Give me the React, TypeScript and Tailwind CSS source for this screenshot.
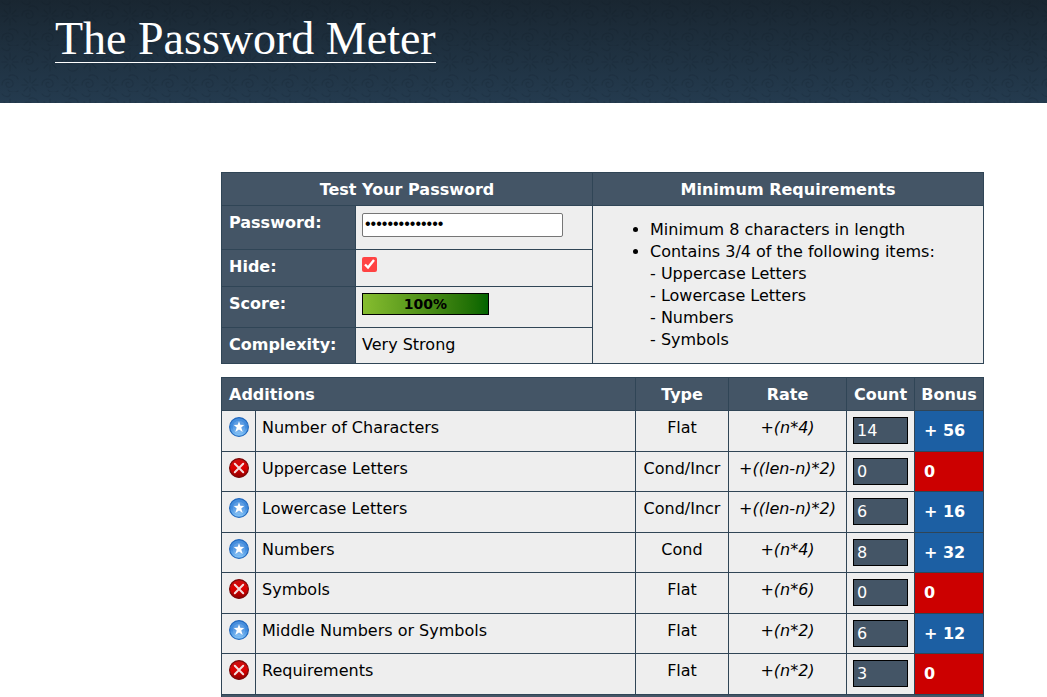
import { useState } from 'react';

type Row = { name: string; type: string; rate: string; count: number; bonus: string; good: boolean };

const rows: Row[] = [
  { name: 'Number of Characters', type: 'Flat', rate: '+(n*4)', count: 14, bonus: '+ 56', good: true },
  { name: 'Uppercase Letters', type: 'Cond/Incr', rate: '+((len-n)*2)', count: 0, bonus: '0', good: false },
  { name: 'Lowercase Letters', type: 'Cond/Incr', rate: '+((len-n)*2)', count: 6, bonus: '+ 16', good: true },
  { name: 'Numbers', type: 'Cond', rate: '+(n*4)', count: 8, bonus: '+ 32', good: true },
  { name: 'Symbols', type: 'Flat', rate: '+(n*6)', count: 0, bonus: '0', good: false },
  { name: 'Middle Numbers or Symbols', type: 'Flat', rate: '+(n*2)', count: 6, bonus: '+ 12', good: true },
  { name: 'Requirements', type: 'Flat', rate: '+(n*2)', count: 3, bonus: '0', good: false },
];

function Gradients() {
  return (
    <svg className="absolute h-0 w-0" aria-hidden="true">
      <defs>
        <linearGradient id="blue" x1="0" y1="0" x2="0" y2="1">
          <stop offset="0" stopColor="#4a90dd" />
          <stop offset="0.5" stopColor="#3d8ade" />
          <stop offset="1" stopColor="#8ecbfa" />
        </linearGradient>
        <linearGradient id="red" x1="0" y1="0" x2="0" y2="1">
          <stop offset="0" stopColor="#c81010" />
          <stop offset="0.5" stopColor="#dc0000" />
          <stop offset="1" stopColor="#8e0000" />
        </linearGradient>
        <pattern id="swirl" width="40" height="46" patternUnits="userSpaceOnUse">
          <g fill="none" stroke="#0c1620" strokeWidth="1.2" strokeLinecap="round">
            <path d="M10 7v6M10 19v6M2 16h5M13 16h5M4 10l4 4M16 10l-4 4M4 22l4-4M16 22l-4-4" />
            <path d="M22 16c0-7 10-8 11-2 1 5-7 6-7 1 0-2 3-2 3-1M38 10c-1-4-6-5-9-3M38 22c-2 4-8 4-10 1" />
            <path d="M30 30v6M30 42v4M22 39h5M33 39h5M24 33l4 4M36 33l-4 4M24 45l4-4M36 45l-4-4" />
            <path d="M2 39c0-7 10-8 11-2 1 5-7 6-7 1 0-2 3-2 3-1M18 33c-1-4-6-5-9-3M18 45c-2 2-8 2-10-1" />
            <path d="M2 2c3 4 8 3 8 0M22 2c3 4 8 3 8 0" />
          </g>
        </pattern>
      </defs>
    </svg>
  );
}

function ExceptionalIcon() {
  return (
    <svg viewBox="0 0 20 20" className="block h-5 w-5" role="img" aria-label="Exceptional">
      <circle cx="10" cy="10" r="9.4" fill="url(#blue)" stroke="#2168bd" strokeWidth="1.1" />
      <circle cx="10" cy="10" r="6.3" fill="#fff" opacity="0.15" />
      <path
        d="M10 4.2l1.3 3.6 3.9.3-2.9 2.3 1.4 4.5L10 12.4l-3.7 2.5 1.4-4.5-2.9-2.3 3.9-.3z"
        fill="#fff"
      />
    </svg>
  );
}

function FailureIcon() {
  return (
    <svg viewBox="0 0 20 20" className="block h-5 w-5" role="img" aria-label="Failure">
      <circle cx="10" cy="10" r="9.4" fill="url(#red)" stroke="#780808" strokeWidth="1.2" />
      <path d="M5.8 5.8l8.4 8.4M14.2 5.8l-8.4 8.4" stroke="#f3dede" strokeWidth="2" strokeLinecap="round" />
    </svg>
  );
}

const cell = 'border border-[#304556] px-[6px] align-top';
const head = 'border border-[#304556] bg-[#445566] font-bold text-white';
const label = 'border border-[#304556] bg-[#445566] pt-[6px] pl-[7px] text-left align-top font-bold text-white';

export default function App() {
  const [password, setPassword] = useState('abcdef12345678');
  const [hide, setHide] = useState(true);

  return (
    <div className="min-h-screen bg-white font-['DejaVu_Sans',sans-serif] text-[16px] leading-[22px] text-black">
      <Gradients />
      <header className="relative h-[103px] bg-linear-to-b from-[#192631] to-[#243b4f] px-[55px] pt-[15px]">
        <svg className="absolute inset-0 h-full w-full opacity-15" aria-hidden="true">
          <rect width="100%" height="100%" fill="url(#swirl)" />
        </svg>
        <h1 className="relative inline-block border-b border-white font-['Liberation_Serif',serif] text-[46px] leading-[47px] text-white">
          The Password Meter
        </h1>
      </header>

      <main className="flex flex-col gap-[13px] pt-[69px] pr-[63px] pl-[221px]">
        <table className="w-full table-fixed border-collapse bg-[#eeeeee]">
          <colgroup>
            <col className="w-[134px]" />
            <col className="w-[237px]" />
            <col />
          </colgroup>
          <thead>
            <tr className="h-[33px]">
              <th colSpan={2} className={`${head} pt-[2px]`}>Test Your Password</th>
              <th className={`${head} pt-[2px]`}>Minimum Requirements</th>
            </tr>
          </thead>
          <tbody>
            <tr className="h-[44px]">
              <th className={label}><label htmlFor="password">Password:</label></th>
              <td className={`${cell} pt-[7px]`}>
                <input
                  id="password"
                  type={hide ? 'password' : 'text'}
                  value={password}
                  onChange={(e) => setPassword(e.target.value)}
                  className="block h-[24px] w-[201px] rounded-[2px] border border-[#767676] bg-white px-[2px] pb-[2px] font-['Liberation_Sans',sans-serif] text-[16px]"
                />
              </td>
              <td rowSpan={4} className="border border-[#304556] pt-[13px] pl-[57px] align-top">
                <ul className="list-disc">
                  <li>Minimum 8 characters in length</li>
                  <li>
                    Contains 3/4 of the following items:
                    <br />- Uppercase Letters
                    <br />- Lowercase Letters
                    <br />- Numbers
                    <br />- Symbols
                  </li>
                </ul>
              </td>
            </tr>
            <tr className="h-[37px]">
              <th className={label}><label htmlFor="hide">Hide:</label></th>
              <td className={`${cell} pt-[7px]`}>
                <input
                  id="hide"
                  type="checkbox"
                  checked={hide}
                  onChange={(e) => setHide(e.target.checked)}
                  className="block h-[15px] w-[15px] accent-[#ff4343]"
                />
              </td>
            </tr>
            <tr className="h-[41px]">
              <th className={label}>Score:</th>
              <td className={`${cell} pt-[6px]`}>
                <div className="h-[22px] w-[127px] border border-black bg-linear-to-r from-[#86bd2f] to-[#006400] text-center text-[14px] leading-[20px] font-bold">
                  100%
                </div>
              </td>
            </tr>
            <tr className="h-[36px]">
              <th className={label}>Complexity:</th>
              <td className={`${cell} pt-[6px]`}>Very Strong</td>
            </tr>
          </tbody>
        </table>

        <table className="w-full table-fixed border-collapse bg-[#eeeeee]">
          <colgroup>
            <col className="w-[34px]" />
            <col />
            <col className="w-[93px]" />
            <col className="w-[118px]" />
            <col className="w-[68px]" />
            <col className="w-[69px]" />
          </colgroup>
          <thead>
            <tr className="h-[33px]">
              <th colSpan={2} className={`${head} pt-[2px] pl-[7px] text-left`}>Additions</th>
              <th className={`${head} pt-[2px]`}>Type</th>
              <th className={`${head} pt-[2px]`}>Rate</th>
              <th className={`${head} pt-[2px]`}>Count</th>
              <th className={`${head} pt-[2px]`}>Bonus</th>
            </tr>
          </thead>
          <tbody>
            {rows.map((r) => (
              <tr key={r.name} className="odd:h-[41px] even:h-[40px]">
                <td className="border border-[#304556] pt-[6px] pl-[7px] align-top">
                  {r.good ? <ExceptionalIcon /> : <FailureIcon />}
                </td>
                <td className={`${cell} pt-[6px]`}>{r.name}</td>
                <td className={`${cell} pt-[6px] text-center whitespace-nowrap`}>{r.type}</td>
                <td className={`${cell} pt-[6px] text-center whitespace-nowrap italic`}>{r.rate}</td>
                <td className={`${cell} pt-[6px]`}>
                  <input
                    type="text"
                    readOnly
                    aria-label={`${r.name} count`}
                    value={r.count}
                    className="block h-[27px] w-[55px] border border-black bg-[#445566] px-[3px] text-white"
                  />
                </td>
                <td className={`border border-[#304556] pl-[9px] font-bold text-white ${r.good ? 'bg-[#1c5fa3]' : 'bg-[#cc0000]'}`}>
                  {r.bonus}
                </td>
              </tr>
            ))}
          </tbody>
          <tfoot>
            <tr className="h-[2px]">
              <td colSpan={6} className="border-x border-t border-[#304556] bg-[#445566]" />
            </tr>
          </tfoot>
        </table>
      </main>
    </div>
  );
}
